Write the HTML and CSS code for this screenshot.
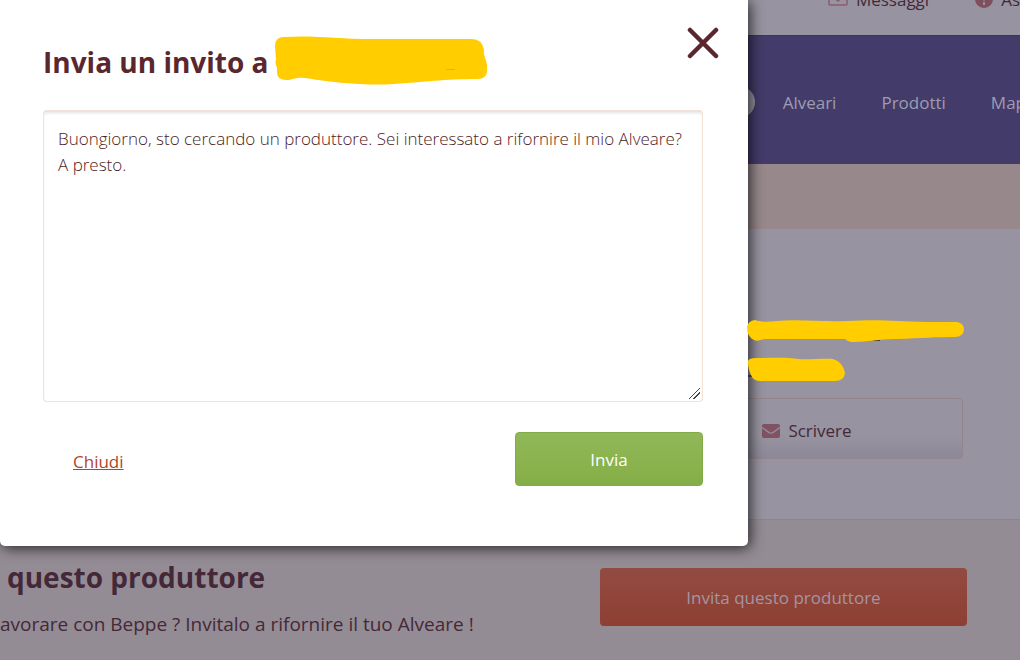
FILE: index.html
```html
<!DOCTYPE html>
<html lang="it">
<head>
  <meta charset="UTF-8" />
  <meta name="viewport" content="width=device-width, initial-scale=1.0"/>
  <title>Invia un invito</title>
  <link rel="stylesheet" href="styles.css">
</head>
<body>
  <div class="page">
    <div class="topbar">
      <a href="#" class="top-link">
        <svg class="top-icon" width="20" height="16" viewBox="0 0 20 16">
          <rect x="1" y="1" width="18" height="13" rx="1" fill="none" stroke="#8a5e69" stroke-width="1.5"/>
          <path d="M2 3l8 7 8-7" fill="none" stroke="#8a5e69" stroke-width="1.5"/>
        </svg>
        Messaggi
      </a>
      <a href="#" class="top-link">
        <svg class="top-icon" width="18" height="18" viewBox="0 0 18 18">
          <circle cx="9" cy="9" r="9" fill="#7f4f5c"/>
          <path d="M6.500 6.500a2.500 2.500 0 1 1 3.500 2.300q-1 .5-1 1.700" fill="none" stroke="#9793a0" stroke-width="2"/>
          <rect x="8" y="12" width="2" height="3" fill="#9793a0"/>
        </svg>
        As
      </a>
    </div>

    <div class="navbar">
      <input class="search" type="search" aria-label="Cerca">
      <a href="#">Alveari</a>
      <a href="#">Prodotti</a>
      <a href="#">Map</a>
    </div>

    <div class="band"></div>

    <div class="profile">
      <button class="write-button" type="button">
        <svg width="18" height="14" viewBox="0 0 18 14">
          <rect width="18" height="14" rx="2" fill="#7f5361"/>
          <path d="M0 3.500l7 5q2 1.400 4 0l7-5" fill="none" stroke="#9793a0" stroke-width="1.300"/>
        </svg>
        Scrivere
      </button>
    </div>

    <div class="invite">
      <div class="invite-text">
        <h2>questo produttore</h2>
        <p>avorare con Beppe ? Invitalo a rifornire il tuo Alveare !</p>
      </div>
      <button class="invite-button" type="button">Invita questo produttore</button>
    </div>
  </div>

  <form class="modal" role="dialog" aria-labelledby="modal-title">
    <div class="modal-header">
      <h1 id="modal-title">Invia un invito a</h1>
      <svg class="name-mark" width="214" height="50" viewBox="0 0 214 50">
        <path d="M1 10Q1 1 10 1C40 -1 62 3 100 3H198Q208 3 210 14C209 20 213 24 213 30V36Q212 43 204 43C170 43 150 46 120 48C90 50 60 46 45 44C30 42 28 40 15 44Q3 45 3 36C4 30 0 28 2 24Z" fill="#ffcd00"/>
        <path d="M172 33.500h9" stroke="#e6b400"/>
      </svg>
      <button class="close-button" type="button" aria-label="Chiudi">
        <svg width="32" height="32" viewBox="0 0 32 32">
          <path d="M3 3l26 26M29 3L3 29" stroke="#5b272f" stroke-width="4.500" stroke-linecap="round"/>
        </svg>
      </button>
    </div>
    <textarea class="message" aria-label="Messaggio">Buongiorno, sto cercando un produttore. Sei interessato a rifornire il mio Alveare?
A presto.</textarea>
    <div class="modal-footer">
      <a href="#" class="cancel">Chiudi</a>
      <button class="send-button" type="submit">Invia</button>
    </div>
  </form>

  <svg class="profile-marks" width="218" height="64" viewBox="0 0 218 64">
    <path d="M1 57h4M126 21h7" stroke="#222" stroke-width="1.500"/>
    <path d="M0 8Q1 2 8 1C14 3 20 3 30 2C50 0 70 3 100 2C130 0 150 2 180 3H210Q217 4 217 11Q216 18 208 18C190 18 175 19 150 20C130 20 124 23 104 23Q100 22 98 20H20C12 20 12 23 7 21Q0 18 0 8Z" fill="#ffcd00"/>
    <path d="M1 42Q2 39 9 39C25 39 40 38 52 40C62 41 75 39 86 40Q96 43 98 54Q97 62 88 62H14Q6 62 4 56Q1 50 1 42Z" fill="#ffcd00"/>
  </svg>
</body>
</html>
```
FILE: styles.css
```css
* {
  margin: 0;
  padding: 0;
  box-sizing: border-box;
  font-family: 'Open Sans', 'Noto Sans', sans-serif;
}
body {
  background-color: #948c94;
  color: #452838;
  font-size: 17px;
  overflow: hidden;
}
a {
  color: inherit;
  text-decoration: none;
}
button {
  border: none;
  border-radius: 4px;
  font-size: 17px;
  cursor: pointer;
}
.page {
  overflow: hidden;
}
/* page is scrolled down by half of the top bar */
.topbar {
  height: 70px;
  margin-top: -35px;
  padding-bottom: 2px;
  background-color: #9793a0;
  display: flex;
  align-items: center;
  justify-content: flex-end;
  gap: 46px;
}
.top-link {
  display: flex;
  align-items: center;
  gap: 8px;
}
.navbar {
  height: 129px;
  background-color: #433c6a;
  border-top: 1px solid #3b355f;
  color: #9f9bb0;
  display: flex;
  align-items: center;
  justify-content: flex-end;
  gap: 45px;
  padding-top: 4px;
  margin-right: -6px;
}
.search {
  width: 300px;
  height: 32px;
  border: none;
  border-radius: 16px;
  background-color: #9793a0;
  margin-right: -17px;
}
.band {
  height: 65px;
  background-color: #97888b;
}
.profile {
  height: 291px;
  background-color: #9793a0;
  border-bottom: 1px solid #958487;
  display: flex;
  align-items: flex-end;
  justify-content: flex-end;
  padding: 0 57px 60px;
}
.write-button {
  width: 312px;
  height: 61px;
  border: 1px solid #93858c;
  background: linear-gradient(#9793a0 60%, #8d8897);
  color: #452838;
  display: flex;
  align-items: center;
  justify-content: center;
  gap: 8px;
  padding-top: 4px;
}
.invite {
  display: flex;
  align-items: flex-start;
  justify-content: space-between;
  padding: 40px 53px 20px 0;
}
.invite-text h2 {
  font-size: 28px;
  line-height: 34px;
  padding-left: 7px;
}
.invite-text p {
  font-size: 19px;
  line-height: 28px;
  margin-top: 16px;
}
.invite-button {
  width: 367px;
  height: 58px;
  margin-top: 8px;
  background: linear-gradient(#924b41, #8e3f32);
  color: #a494a3;
}
.modal {
  position: absolute;
  top: 0;
  left: 0;
  right: 272px;
  background-color: #fff;
  border-radius: 0 0 5px 5px;
  box-shadow: 2px 2px 14px rgba(0, 0, 0, 0.75);
  color: #5b272f;
  padding: 24px 45px 60px 43px;
}
.modal-header {
  display: flex;
  align-items: center;
  height: 74px;
}
.modal-header h1 {
  font-size: 28px;
  padding-top: 2px;
}
.name-mark {
  margin-left: 5px;
}
.close-button {
  width: 32px;
  height: 32px;
  background: none;
  margin: 0 -16px 36px auto;
}
.message {
  display: block;
  width: 100%;
  height: 292px;
  margin-top: 12px;
  padding: 14px;
  border: 1px solid #f3e2d5;
  border-top: 2px solid #f1e1d8;
  border-radius: 4px;
  box-shadow: inset 0 2px 2px #eeeeee;
  color: #4d1b24;
  font-size: 17px;
  font-weight: 300;
  line-height: 26px;
  resize: vertical;
}
.message::-webkit-resizer {
  background: linear-gradient(135deg, transparent 46%, #444 46% 54%, transparent 54% 68%, #444 68% 76%, transparent 76%) 2px 2px / 11px 11px no-repeat;
}
.modal-footer {
  display: flex;
  align-items: center;
  justify-content: space-between;
  margin-top: 30px;
  padding-left: 30px;
}
.cancel {
  color: #b5432a;
  padding-top: 4px;
  text-decoration: underline;
}
.send-button {
  width: 188px;
  height: 54px;
  border: 1px solid #82aa49;
  background: linear-gradient(#90b858, #86ae47);
  color: #fff;
}
.profile-marks {
  position: absolute;
  top: 319px;
  right: 55px;
}
```
